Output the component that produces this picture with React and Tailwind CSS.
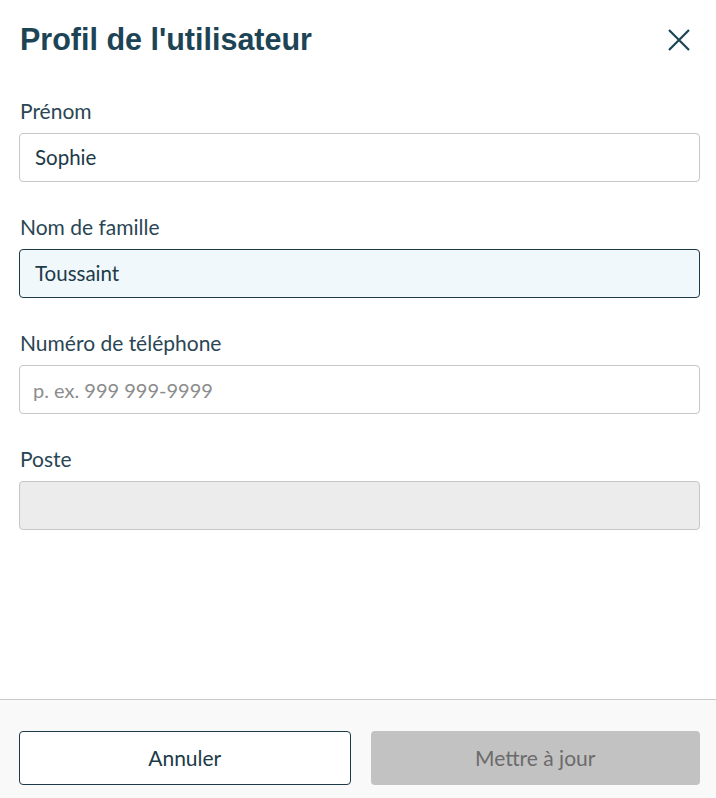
import React from "react";

export default function App() {
  return (
    <div className="h-screen w-full bg-white flex flex-col font-['Lato',sans-serif]">
      <div className="flex-1 pl-[19px] pr-[16px]">
        <div className="flex items-start justify-between pt-[21px]">
          <h1 className="font-['Liberation_Sans',Arial,sans-serif] font-bold text-[30.5px] leading-[36px] text-[#1d4455] pl-px">
            Profil de l'utilisateur
          </h1>
          <button className="mt-[7px] mr-[9px] text-[#1d4455]" aria-label="Fermer">
            <svg width="24" height="24" viewBox="0 0 24 24" fill="none" stroke="currentColor" strokeWidth="2.2">
              <path d="M2 2 L22 22 M22 2 L2 22" />
            </svg>
          </button>
        </div>

        <div className="mt-[42px] flex flex-col gap-[33px]">
          <Field label="Prénom">
            <div className="h-[49px] rounded-[4px] border border-[#c6c6c6] bg-white flex items-center px-[15px] text-[20.5px] text-[#1d3a48]">
              Sophie
            </div>
          </Field>
          <Field label="Nom de famille">
            <div className="h-[49px] rounded-[4px] border border-[#1d3a48] bg-[#f0f8fc] flex items-center px-[15px] text-[20.5px] text-[#1d3a48]">
              Toussaint
            </div>
          </Field>
          <Field label="Numéro de téléphone">
            <div className="h-[49px] rounded-[4px] border border-[#c6c6c6] bg-white flex items-center px-[13px] text-[20px] text-[#8c8c8c]">
              p. ex. 999 999-9999
            </div>
          </Field>
          <Field label="Poste">
            <div className="h-[49px] rounded-[4px] border border-[#c6c6c6] bg-[#ececec]" />
          </Field>
        </div>
      </div>

      <div className="border-t border-[#cacaca] bg-[#f9f9f9] pl-[19px] pr-[16px] pt-[31px] pb-[13px] flex gap-[20px]">
        <button className="flex-1 h-[54px] rounded-[4px] border border-[#1d3a48] bg-white text-[21px] text-[#1d3a48]">
          Annuler
        </button>
        <button className="flex-1 h-[54px] rounded-[4px] bg-[#c2c2c2] text-[21px] text-[#6b6b6b]">
          Mettre à jour
        </button>
      </div>
    </div>
  );
}

function Field({ label, children }) {
  return (
    <div className="flex flex-col">
      <label className="text-[21px] leading-[24px] text-[#2a4654] pl-[1px]">{label}</label>
      <div className="mt-[10px]">{children}</div>
    </div>
  );
}
